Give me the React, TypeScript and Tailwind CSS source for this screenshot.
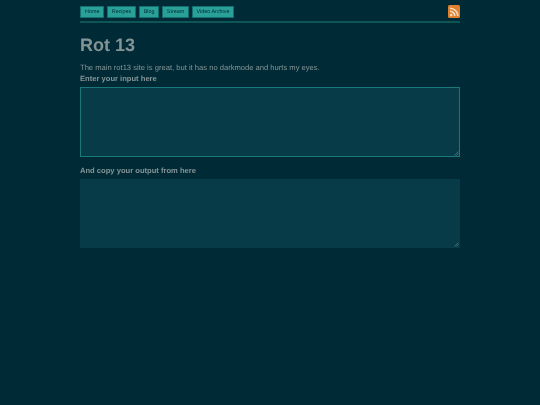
import React from 'react'

const links = ['Home', 'Recipes', 'Blog', 'Stream', 'Video Archive']

function RssIcon() {
  return (
    <svg width="12" height="13" viewBox="0 0 12 13" className="block">
      <rect width="12" height="13" rx="1.5" fill="#e0812f" />
      <circle cx="3.2" cy="10" r="1.3" fill="#f3dcc2" />
      <path d="M2 6.2a4.8 4.8 0 0 1 4.8 4.8" fill="none" stroke="#f3dcc2" strokeWidth="1.6" />
      <path d="M2 3.2a7.8 7.8 0 0 1 7.8 7.8" fill="none" stroke="#f3dcc2" strokeWidth="1.6" />
    </svg>
  )
}

function Grip() {
  return (
    <svg width="5" height="5" viewBox="0 0 5 5" className="absolute right-[1px] bottom-[1px]">
      <path d="M0.5 4.5 4.5 0.5M2.5 4.5 4.5 2.5" stroke="#4f7f86" strokeWidth="0.8" fill="none" />
    </svg>
  )
}

export default function App() {
  return (
    <div className="min-h-[405px] bg-[#002b36] font-['Liberation_Sans',Arial,sans-serif] [text-rendering:geometricPrecision]">
      <div className="mx-auto w-[380px] pt-[5px] will-change-transform">
        {/* Nav */}
        <div className="flex items-center justify-between border-b-2 border-[#0e5655] h-[18px]">
          <div className="flex gap-[2.4px] self-start pt-[1px]">
            {links.map((link) => (
              <a
                key={link}
                className="h-[12px] bg-[#2aa198] border border-[#11706d] px-[4px] text-[5.4px] leading-[10px] text-[#002b36]"
              >
                {link}
              </a>
            ))}
          </div>
          <div className="self-start">
            <RssIcon />
          </div>
        </div>

        <h1 className="mt-[12px] text-[18px] leading-[21px] font-bold text-[#839496]">Rot 13</h1>
        <p className="mt-[7px] text-[7.6px] leading-[10px] text-[#839496]">
          The main rot13 site is great, but it has no darkmode and hurts my eyes.
        </p>
        <label className="block mt-[1px] text-[7.6px] leading-[10px] font-bold text-[#839496]">
          Enter your input here
        </label>
        <div className="relative mt-[3px]">
          <textarea className="block w-[380px] h-[70px] bg-[#073b47] border border-[#1b7878] outline-none resize-none" />
          <Grip />
        </div>
        <label className="block mt-[9px] text-[7.6px] leading-[10px] font-bold text-[#839496]">
          And copy your output from here
        </label>
        <div className="relative mt-[3px]">
          <textarea className="block w-[380px] h-[69px] bg-[#073b47] outline-none resize-none" />
          <Grip />
        </div>
      </div>
    </div>
  )
}
